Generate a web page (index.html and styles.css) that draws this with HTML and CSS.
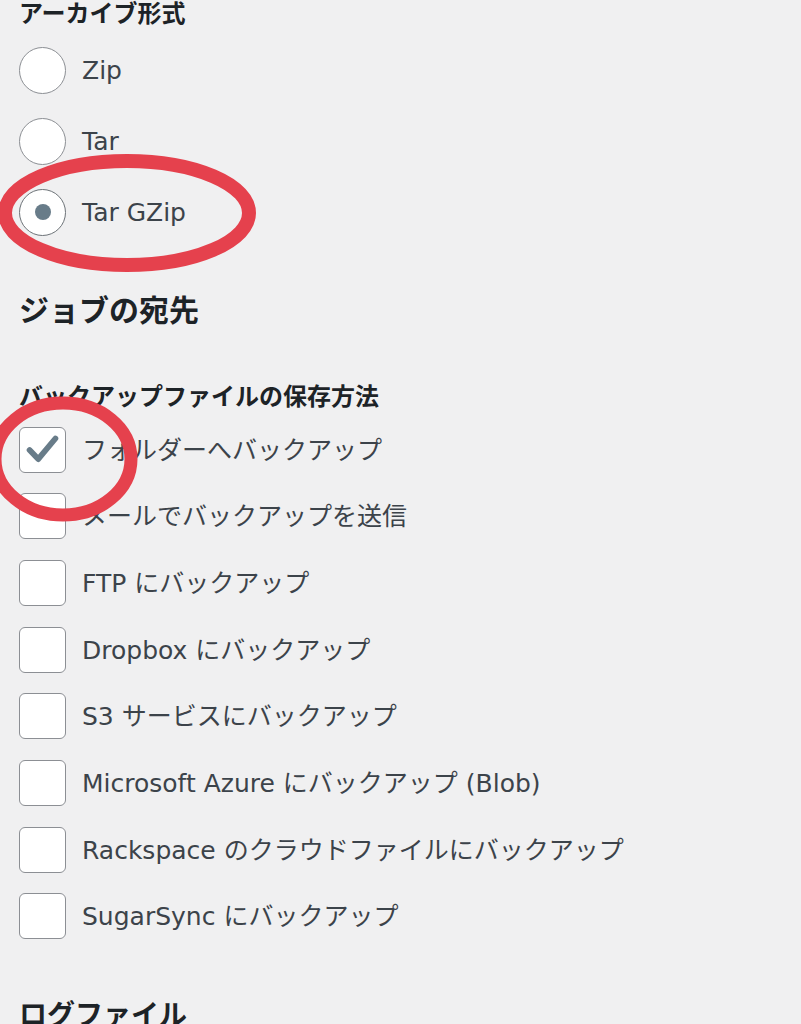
FILE: index.html
```html
<!DOCTYPE html>
<html lang="ja">
    <head>
        <meta charset="UTF-8">
        <meta name="viewport" content="width=device-width, initial-scale=1.0">
        <title>ジョブの設定</title>
        <link rel="stylesheet" href="styles.css">
    </head>
    <body>
        <div class="page">
            <h3 class="field-title first">アーカイブ形式</h3>
            <div class="radio-list">
                <label class="option">
                    <span class="radio"></span>
                    <span class="option-text">Zip</span>
                </label>
                <label class="option">
                    <span class="radio"></span>
                    <span class="option-text">Tar</span>
                </label>
                <label class="option">
                    <span class="radio checked"></span>
                    <span class="option-text">Tar GZip</span>
                </label>
            </div>

            <h2 class="section-title">ジョブの宛先</h2>

            <h3 class="field-title">バックアップファイルの保存方法</h3>
            <div class="check-list">
                <label class="option">
                    <span class="checkbox">
                        <svg viewBox="0 0 47 46" width="47" height="46">
                            <polyline points="10,23 19,32.5 37,11" fill="none" stroke="#687c89" stroke-width="6" stroke-linecap="round" stroke-linejoin="round"/>
                        </svg>
                    </span>
                    <span class="option-text">フォルダーへバックアップ</span>
                </label>
                <label class="option">
                    <span class="checkbox"></span>
                    <span class="option-text">メールでバックアップを送信</span>
                </label>
                <label class="option">
                    <span class="checkbox"></span>
                    <span class="option-text">FTP にバックアップ</span>
                </label>
                <label class="option">
                    <span class="checkbox"></span>
                    <span class="option-text">Dropbox にバックアップ</span>
                </label>
                <label class="option">
                    <span class="checkbox"></span>
                    <span class="option-text">S3 サービスにバックアップ</span>
                </label>
                <label class="option">
                    <span class="checkbox"></span>
                    <span class="option-text">Microsoft Azure にバックアップ (Blob)</span>
                </label>
                <label class="option">
                    <span class="checkbox"></span>
                    <span class="option-text">Rackspace のクラウドファイルにバックアップ</span>
                </label>
                <label class="option">
                    <span class="checkbox"></span>
                    <span class="option-text">SugarSync にバックアップ</span>
                </label>
            </div>

            <h2 class="section-title log">ログファイル</h2>

            <!-- 赤丸の注釈 -->
            <svg class="marks" viewBox="0 0 801 1024" width="801" height="1024">
                <ellipse cx="127" cy="213" rx="122" ry="52" fill="none" stroke="#e5414d" stroke-width="14"/>
                <ellipse cx="63" cy="459" rx="68" ry="56" fill="none" stroke="#e5414d" stroke-width="13"/>
            </svg>
        </div>
    </body>
</html>
```

FILE: styles.css
```css
body {
    margin: 0;
    background-color: #f0f0f1;
    font-family: "DejaVu Sans", "Noto Sans CJK JP", sans-serif;
    color: #3c434a;
}

.page {
    position: relative;
    height: 1024px;
    overflow: hidden;
    padding: 0 19px;
}

.field-title {
    margin: 52px 0 0;
    font-family: "Noto Sans CJK JP", sans-serif;
    font-size: 24px;
    line-height: 30px;
    font-weight: 700;
    color: #1d2327;
}

.field-title.first {
    margin-top: -3px;
}

.section-title {
    margin: 52px 0 0;
    font-family: "Noto Sans CJK JP", sans-serif;
    font-size: 30px;
    line-height: 40px;
    font-weight: 700;
    color: #1d2327;
}

.section-title.log {
    margin-top: 54px;
    font-size: 28px;
}

.radio-list {
    display: flex;
    flex-direction: column;
    gap: 24px;
    margin-top: 19.5px;
}

.check-list {
    display: flex;
    flex-direction: column;
    gap: 20.7px;
    margin-top: 17px;
}

.option {
    display: flex;
    align-items: center;
    gap: 16px;
}

.option-text {
    font-size: 25px;
    line-height: 30px;
    padding-top: 2px;
}

/* ラジオボタン */
.radio {
    box-sizing: border-box;
    width: 47px;
    height: 47px;
    border: 1.5px solid #8c8f94;
    border-radius: 50%;
    background: #fff;
    display: flex;
    justify-content: center;
    align-items: center;
}

.radio.checked {
    border-color: #6d7378;
}

.radio.checked::after {
    content: "";
    width: 16px;
    height: 16px;
    border-radius: 50%;
    background-color: #687c89;
}

/* チェックボックス */
.checkbox {
    box-sizing: border-box;
    width: 47px;
    height: 46px;
    border: 1.5px solid #8c8f94;
    border-radius: 6px;
    background: #fff;
    display: flex;
    justify-content: center;
    align-items: center;
}

.checkbox svg {
    display: block;
}

.marks {
    position: absolute;
    top: 0;
    left: 0;
    pointer-events: none;
}
```
